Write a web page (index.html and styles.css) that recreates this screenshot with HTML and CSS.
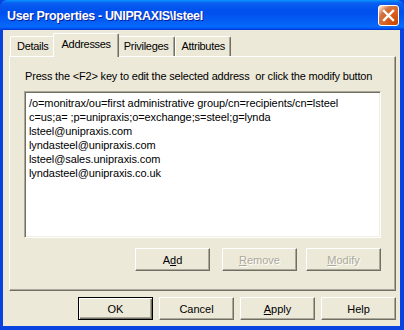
FILE: index.html
```html
<!DOCTYPE html>
<html>
<head>
<meta charset="utf-8">
<link rel="stylesheet" href="styles.css">
</head>
<body>
<div class="window">
  <div class="titlebar">
    <span class="title">User Properties - UNIPRAXIS\lsteel</span>
    <span class="close">
      <svg width="13" height="13" viewBox="0 0 13 13"><path d="M2 2 L11 11 M11 2 L2 11" stroke="#fff" stroke-width="2.4" stroke-linecap="square"/></svg>
    </span>
  </div>
  <div class="client">
    <div class="tabs">
      <div class="tab">Details</div>
      <div class="tab active">Addresses</div>
      <div class="tab">Privileges</div>
      <div class="tab">Attributes</div>
    </div>
    <div class="panel">
      <div class="hint">Press the &lt;F2&gt; key to edit the selected address &nbsp;or click the modify button</div>
      <div class="listbox">
        <div class="item">/o=monitrax/ou=first administrative group/cn=recipients/cn=lsteel</div>
        <div class="item">c=us;a= ;p=unipraxis;o=exchange;s=steel;g=lynda</div>
        <div class="item">lsteel@unipraxis.com</div>
        <div class="item">lyndasteel@unipraxis.com</div>
        <div class="item">lsteel@sales.unipraxis.com</div>
        <div class="item">lyndasteel@unipraxis.co.uk</div>
      </div>
      <div class="row panel-buttons">
        <div class="btn">A<u>d</u>d</div>
        <div class="btn disabled gap12"><u>R</u>emove</div>
        <div class="btn disabled gap9"><u>M</u>odify</div>
      </div>
    </div>
    <div class="row dialog-buttons">
      <div class="btn default">OK</div>
      <div class="btn">Cancel</div>
      <div class="btn"><u>A</u>pply</div>
      <div class="btn">Help</div>
    </div>
  </div>
</div>
</body>
</html>
```
FILE: styles.css
```css
* { box-sizing: border-box; }
html, body { margin: 0; padding: 0; }
body {
  width: 404px;
  height: 330px;
  overflow: hidden;
  background: #0842e0;
  font-family: "Liberation Sans", Arial, sans-serif;
  font-size: 11px;
  color: #000;
}
.window {
  width: 404px;
  height: 330px;
  display: flex;
  flex-direction: column;
  background: #0842e0;
  border-radius: 7px 7px 0 0;
  overflow: hidden;
}
.titlebar {
  height: 30px;
  flex: none;
  display: flex;
  align-items: center;
  padding: 0 5px 0 7px;
  background: linear-gradient(180deg, #0997ff 0%, #0a5ef0 10%, #0053ee 30%, #0050ee 45%, #0664f8 80%, #066af9 88%, #005bff 94%, #003dd7 97%, #003dd7 100%);
}
.title {
  flex: 1;
  color: #fff;
  font-family: "Liberation Sans", Arial, sans-serif;
  font-weight: bold;
  font-size: 12.5px;
  letter-spacing: -0.35px;
  text-shadow: 1px 1px 0 #0a1e9e;
  padding-top: 2px;
}
.close {
  width: 21px;
  height: 21px;
  margin-top: 1px;
  border: 1px solid #fff;
  border-radius: 3px;
  background: radial-gradient(circle at 90% 90%, #cc4600 0%, #dc6527 55%, #cd7546 70%, #ffccb2 90%, #fff 100%);
  display: flex;
  align-items: center;
  justify-content: center;
}
.client {
  flex: 1;
  margin: 0 4px 4px 3px;
  background: #ece9d8;
  padding: 3px 4px 0 6px;
  display: flex;
  flex-direction: column;
}
.tabs {
  display: flex;
  align-items: flex-end;
  height: 23px;
  padding-left: 1px;
  position: relative;
  z-index: 1;
}
.tab {
  height: 20px;
  padding: 3px 5px 0 6px;
  border-top: 1px solid #fff;
  border-left: 1px solid #fff;
  border-right: 1px solid #716f64;
  box-shadow: inset -1px 0 0 #aca899;
  border-radius: 2px 2px 0 0;
  background: #ece9d8;
  white-space: nowrap;
  letter-spacing: -0.3px;
}
.tab.active {
  height: 24px;
  margin: 0 -2px -1px -2px;
  padding: 4px 7px 0 8px;
  position: relative;
  z-index: 2;
}
.tab.active + .tab { border-left: none; padding-left: 7px; }
.panel {
  height: 235px;
  border-top: 1px solid #fff;
  border-left: 1px solid #fff;
  border-right: 1px solid #716f64;
  border-bottom: 1px solid #716f64;
  box-shadow: inset -1px -1px 0 #aca899;
  padding: 12px 14px 0 15px;
  display: flex;
  flex-direction: column;
}
.hint {
  height: 14px;
  line-height: 14px;
  white-space: nowrap;
  letter-spacing: -0.18px;
}
.listbox {
  margin-top: 8px;
  height: 147px;
  background: #fff;
  border-top: 1px solid #aca899;
  border-left: 1px solid #aca899;
  border-right: 1px solid #fff;
  border-bottom: 1px solid #fff;
  box-shadow: inset 1px 1px 0 #716f64, inset -1px -1px 0 #f1efe2;
  padding: 4px 4px;
  margin-left: -1px;
}
.item {
  height: 14px;
  line-height: 14px;
  white-space: nowrap;
  letter-spacing: -0.08px;
}
.row {
  display: flex;
  justify-content: flex-end;
}
.panel-buttons {
  margin-top: 10px;
}
.dialog-buttons {
  margin-top: 6px;
  gap: 6px;
}
.gap12 { margin-left: 12px; }
.gap9 { margin-left: 9px; }
.btn {
  width: 75px;
  height: 23px;
  display: flex;
  align-items: center;
  justify-content: center;
  background: #ece9d8;
  border-top: 1px solid #fff;
  border-left: 1px solid #fff;
  border-right: 1px solid #716f64;
  border-bottom: 1px solid #716f64;
  box-shadow: inset -1px -1px 0 #aca899;
  font-size: 11px;
}
.btn u { text-underline-offset: 1px; }
.btn.default {
  border: 1px solid #000;
  box-shadow: inset 1px 1px 0 #fff, inset -1px -1px 0 #716f64, inset -2px -2px 0 #aca899;
}
.btn.disabled {
  color: #aca899;
  text-shadow: 1px 1px 0 #fff;
}
```
